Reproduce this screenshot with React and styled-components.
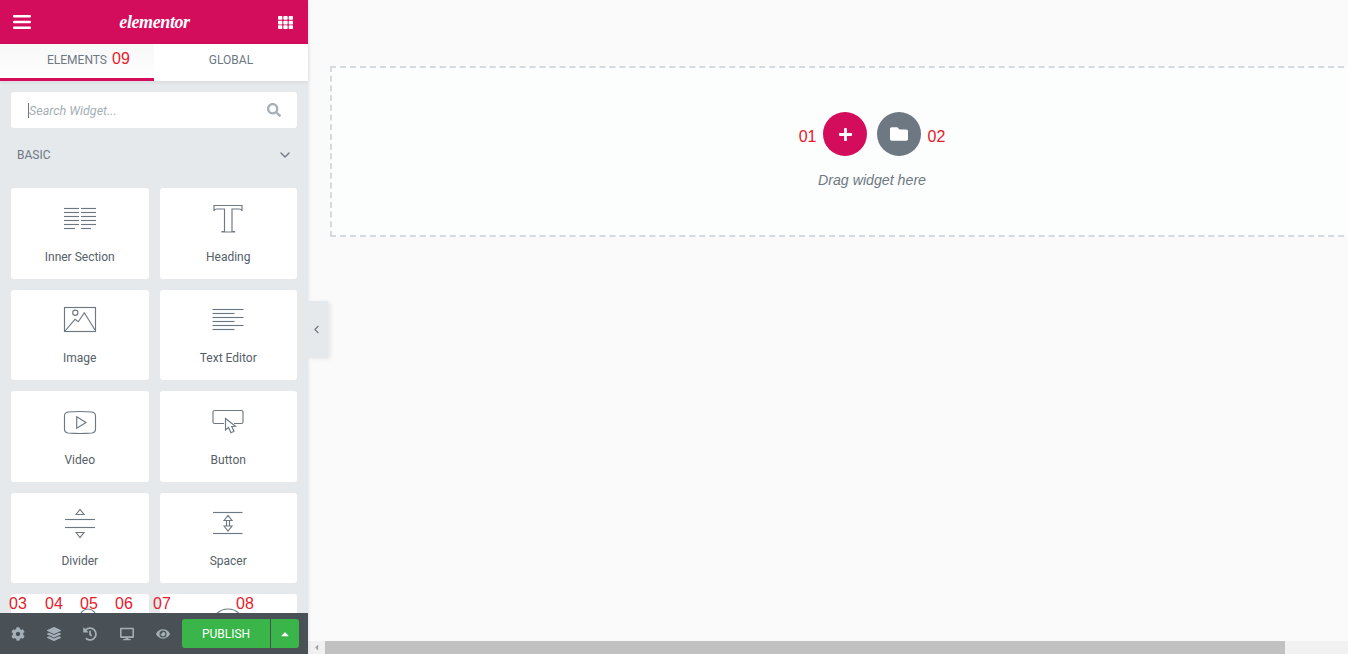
import React from 'react'
import styled, { createGlobalStyle } from 'styled-components'
import {
  FaTh, FaSearch, FaPlus, FaFolder,
  FaCog, FaLayerGroup, FaHistory, FaDesktop, FaEye, FaCaretUp, FaCaretLeft,
} from 'react-icons/fa'
import { FiChevronDown, FiChevronLeft } from 'react-icons/fi'

const Global = createGlobalStyle`
  html, body {
    margin: 0;
    height: 100%;
    overflow: hidden;
    font-family: Roboto, "Liberation Sans", Arial, sans-serif;
  }
  #root { height: 100%; }
  * { box-sizing: border-box; }
`

const Page = styled.div`
  display: flex;
  height: 654px;
  width: 1348px;
  overflow: hidden;
  background: #fafafa;
`

const Sidebar = styled.aside`
  position: relative;
  z-index: 2;
  display: flex;
  flex-direction: column;
  flex: 0 0 308px;
  height: 100%;
  background: #e6e9ec;
  box-shadow: 1px 0 3px rgba(0, 0, 0, 0.08);
`

const Header = styled.header`
  display: flex;
  flex: 0 0 44px;
  align-items: center;
  justify-content: space-between;
  padding: 0 15px 0 13px;
  background: #d30c5c;
  color: #fff;
`

const Logo = styled.div`
  font-family: "Liberation Serif", serif;
  font-style: italic;
  font-weight: 700;
  font-size: 18px;
  letter-spacing: -0.4px;
  line-height: 1;
  margin: -1px 0 0 0;
`

const Tabs = styled.nav`
  display: flex;
  flex: 0 0 37px;
  background: #fff;
  box-shadow: 0 1px 4px rgba(0, 0, 0, 0.08);
`

const Tab = styled.div`
  flex: 1;
  display: flex;
  align-items: center;
  justify-content: center;
  font-size: 12px;
  padding-bottom: ${(p) => (p.$active ? '2px' : '5px')};
  color: #6d7882;
  background: ${(p) => (p.$active ? 'linear-gradient(#f7f7f8, #fff)' : '#fff')};
  border-bottom: ${(p) => (p.$active ? '3px solid #d30c5c' : 'none')};
`

const TabLabel = styled.span`
  position: relative;
`

const Note = styled.span`
  font-family: "Liberation Sans", Arial, sans-serif;
  font-size: 16px;
  line-height: 18px;
  color: #e5202c;
`

const TabNote = styled(Note)`
  position: absolute;
  left: calc(100% + 5px);
  top: -3px;
`

const Scroller = styled.div`
  flex: 1;
  min-height: 0;
  overflow: hidden;
  padding: 11px 11px 0;
`

const SearchBox = styled.div`
  display: flex;
  align-items: center;
  justify-content: space-between;
  height: 36px;
  padding: 0 16px 0 17px;
  background: #fff;
  border-radius: 3px;
  color: #a4afb7;
`

const Placeholder = styled.span`
  font-size: 12.5px;
  font-style: italic;
  color: #a4afb7;
  border-left: 1px solid #6d7882;
`

const Category = styled.div`
  display: flex;
  align-items: center;
  justify-content: space-between;
  height: 60px;
  padding: 0 4px 6px 6px;
  font-size: 12px;
  color: #6d7882;
`

const Grid = styled.div`
  display: grid;
  grid-template-columns: 1fr 1fr;
  grid-auto-rows: 90.5px;
  gap: 11px;
`

const Card = styled.div`
  display: flex;
  flex-direction: column;
  align-items: center;
  padding-top: 13px;
  background: #fff;
  border-radius: 3px;
`

const CardTitle = styled.div`
  margin-top: 12.6px;
  font-size: 12px;
  line-height: 14px;
  color: #556068;
`

const WidgetSvg = styled.svg`
  display: block;
  fill: none;
  stroke: #6d7882;
  stroke-width: 1.15;
`

const Footer = styled.footer`
  position: relative;
  display: flex;
  flex: 0 0 41px;
  align-items: center;
  padding: 0 9px 0 0;
  background: #495157;
  color: #a4afb7;
`

const FooterIcon = styled.div`
  display: flex;
  flex: 0 0 36.2px;
  align-items: center;
  justify-content: center;
  font-size: 14px;
`

const Publish = styled.div`
  display: flex;
  height: 29px;
  margin-left: auto;
  border-radius: 3px;
  overflow: hidden;
  background: #39b54a;
  color: #fff;
  font-size: 12px;
`

const PublishLabel = styled.div`
  display: flex;
  align-items: center;
  justify-content: center;
  width: 89px;
  border-right: 1px solid #495157;
`

const PublishArrow = styled.div`
  display: flex;
  align-items: center;
  justify-content: center;
  width: 28px;
  font-size: 12px;
`

const FooterNote = styled(Note)`
  position: absolute;
  top: -18px;
  left: ${(p) => p.$left}px;
`

const Toggle = styled.div`
  position: absolute;
  top: 301px;
  left: 100%;
  display: flex;
  align-items: center;
  justify-content: center;
  width: 20px;
  height: 57px;
  padding-right: 3px;
  background: #e6e9ec;
  color: #6d7882;
  font-size: 13px;
  box-shadow: 3px 1px 4px rgba(0, 0, 0, 0.07);
`

const Preview = styled.main`
  display: flex;
  flex-direction: column;
  flex: 1;
  min-width: 0;
`

const Canvas = styled.div`
  flex: 1;
  min-height: 0;
  overflow: hidden;
  padding: 66px 0 0 22px;
`

const DropZone = styled.section`
  display: flex;
  flex-direction: column;
  align-items: center;
  width: 1084px;
  height: 171px;
  padding-top: 44px;
  background: #fcfdfd;
  border: 2px dashed #d5dadf;
`

const ActionRow = styled.div`
  display: flex;
  align-items: center;
  gap: 10px;
`

const ActionNote = styled(Note)`
  margin: 6px -3.5px 0;
`

const RoundButton = styled.div`
  display: flex;
  align-items: center;
  justify-content: center;
  width: 44px;
  height: 44px;
  border-radius: 50%;
  background: ${(p) => p.$bg};
  color: #fff;
  font-size: ${(p) => p.$size}px;
`

const DragText = styled.div`
  margin-top: 16px;
  font-family: "Liberation Sans", Arial, sans-serif;
  font-size: 14.2px;
  line-height: 16px;
  font-style: italic;
  color: #6d7882;
`

const ScrollTrack = styled.div`
  display: flex;
  flex: 0 0 13px;
  align-items: stretch;
  background: #f1f1f1;
`

const ScrollArrow = styled.div`
  display: flex;
  align-items: center;
  justify-content: center;
  width: 17px;
  color: #a3a3a3;
  font-size: 9px;
`

const ScrollThumb = styled.div`
  width: 960px;
  background: #c1c1c1;
`

const Lines = ({ rows }) =>
  rows.map(([x1, x2, y]) => <line key={`${x1}-${y}`} x1={x1} x2={x2} y1={y} y2={y} />)

const Icon = ({ children }) => (
  <WidgetSvg width="40" height="36" viewBox="0 0 40 36">
    {children}
  </WidgetSvg>
)

const Hamburger = () => (
  <svg width="18" height="14" viewBox="0 0 18 14" fill="#fff">
    <rect y="0" width="18" height="2.6" rx="1" />
    <rect y="5.7" width="18" height="2.6" rx="1" />
    <rect y="11.4" width="18" height="2.6" rx="1" />
  </svg>
)

const ys = [7.5, 11.5, 15.5, 19.5, 23.5]

const widgets = [
  {
    title: 'Inner Section',
    icon: (
      <Lines
        rows={[
          ...ys.map((y) => [4, 19, y]),
          ...ys.map((y) => [21, 36, y]),
          [4, 15, 27.5],
          [21, 31, 27.5],
        ]}
      />
    ),
  },
  {
    title: 'Heading',
    icon: <path d="M6 10V4.5H34V10C33.5 8 33 8 31 8H24V30.5H26.5V31H14V30.5H16.5V8H9C7 8 6.5 8 6 10Z" />,
  },
  {
    title: 'Image',
    icon: (
      <>
        <rect x="4.5" y="4.5" width="31" height="24" />
        <circle cx="15.3" cy="9.7" r="2.6" />
        <path d="M5 28L15 16.3L18.3 18.7L24.3 9.7L35 27" />
      </>
    ),
  },
  {
    title: 'Text Editor',
    icon: (
      <Lines
        rows={[
          [4.5, 35.5, 6.5],
          [4.5, 26.5, 10.5],
          [4.5, 35.5, 14.5],
          [4.5, 26.5, 18.5],
          [4.5, 35.5, 22.5],
          [4.5, 26.5, 26.5],
        ]}
      />
    ),
  },
  {
    title: 'Video',
    icon: (
      <>
        <path d="M8 8Q20 7 32 8Q35.5 8.5 35.5 12V25Q35.5 28.5 32 29Q20 30 8 29Q4.5 28.5 4.5 25V12Q4.5 8.5 8 8Z" />
        <path d="M16.7 12.7L26 18.5L16.7 24.3Z" />
      </>
    ),
  },
  {
    title: 'Button',
    icon: (
      <>
        <path d="M16 19.5H6.5A1.5 1.5 0 0 1 5 18V7.8A1.5 1.5 0 0 1 6.5 6.5H33.5A1.5 1.5 0 0 1 35 7.8V18A1.5 1.5 0 0 1 33.5 19.5H26" />
        <path d="M17.5 14.5V26L20.5 23.5L23 28.7L26 27.3L23.7 22.5L27.5 22.2Z" />
      </>
    ),
  },
  {
    title: 'Divider',
    icon: (
      <>
        <Lines rows={[[5, 35, 13.5], [5, 35, 21.5]]} />
        <path d="M16 8.5L20 3.5L24 8.5Z" />
        <path d="M16 26.5L20 31.5L24 26.5Z" />
      </>
    ),
  },
  {
    title: 'Spacer',
    icon: (
      <>
        <Lines rows={[[5, 34.5, 6.5], [5, 34.5, 27.5]]} />
        <path d="M16 14.5L20 9.5L24 14.5ZM16 20L20 25L24 20ZM18.5 14.5V20M21.5 14.5V20" />
      </>
    ),
  },
  { title: '', icon: <circle cx="28" cy="10" r="8" /> },
  { title: '', icon: <circle cx="20" cy="18" r="16" /> },
]

const footerIcons = [FaCog, FaLayerGroup, FaHistory, FaDesktop, FaEye]
const footerNotes = [['03', 9], ['04', 45], ['05', 80], ['06', 115], ['07', 153], ['08', 236]]

export default function App() {
  return (
    <Page>
      <Global />
      <Sidebar>
        <Header>
          <Hamburger />
          <Logo>elementor</Logo>
          <FaTh size={15} />
        </Header>
        <Tabs>
          <Tab $active>
            <TabLabel>
              ELEMENTS
              <TabNote>09</TabNote>
            </TabLabel>
          </Tab>
          <Tab>GLOBAL</Tab>
        </Tabs>
        <Scroller>
          <SearchBox>
            <Placeholder>Search Widget...</Placeholder>
            <FaSearch size={14} />
          </SearchBox>
          <Category>
            BASIC
            <FiChevronDown size={16} />
          </Category>
          <Grid>
            {widgets.map((w, i) => (
              <Card key={i}>
                <Icon>{w.icon}</Icon>
                <CardTitle>{w.title}</CardTitle>
              </Card>
            ))}
          </Grid>
        </Scroller>
        <Footer>
          {footerIcons.map((Ic, i) => (
            <FooterIcon key={i}>
              <Ic />
            </FooterIcon>
          ))}
          {footerNotes.map(([n, left]) => (
            <FooterNote key={n} $left={left}>
              {n}
            </FooterNote>
          ))}
          <Publish>
            <PublishLabel>PUBLISH</PublishLabel>
            <PublishArrow>
              <FaCaretUp />
            </PublishArrow>
          </Publish>
        </Footer>
        <Toggle>
          <FiChevronLeft />
        </Toggle>
      </Sidebar>
      <Preview>
        <Canvas>
          <DropZone>
            <ActionRow>
              <ActionNote>01</ActionNote>
              <RoundButton $bg="#d30c5c" $size={15}>
                <FaPlus />
              </RoundButton>
              <RoundButton $bg="#6d7882" $size={18}>
                <FaFolder />
              </RoundButton>
              <ActionNote>02</ActionNote>
            </ActionRow>
            <DragText>Drag widget here</DragText>
          </DropZone>
        </Canvas>
        <ScrollTrack>
          <ScrollArrow>
            <FaCaretLeft />
          </ScrollArrow>
          <ScrollThumb />
        </ScrollTrack>
      </Preview>
    </Page>
  )
}
